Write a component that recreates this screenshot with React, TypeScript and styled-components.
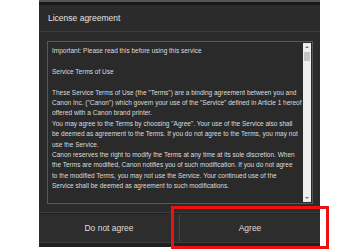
import React from 'react';
import styled, { createGlobalStyle } from 'styled-components';

const GlobalStyle = createGlobalStyle`
    html, body {
        margin: 0;
        padding: 0;
        background: #fff;
    }
    body {
        font-family: "Liberation Sans", Arial, sans-serif;
    }
`;

const Page = styled.div`
    position: relative;
    width: 364px;
    height: 250px;
    overflow: hidden;
    padding-left: 39px;
    box-sizing: border-box;
`;

const Dialog = styled.div`
    width: 281px;
    display: flex;
    flex-direction: column;
    background: #2b2b2b;
    border-top: 2px solid #555;
    box-shadow: inset 0 3px 0 #181818;
`;

const Header = styled.div`
    height: 26px;
    margin-top: 3px;
    display: flex;
    align-items: center;
    padding-left: 9px;
    border-bottom: 1px solid #3d3d3d;
    color: #e2e2e2;
    font-size: 8.5px;
`;

const Body = styled.div`
    padding: 9px 7px 8px 8px;
    border-bottom: 1px solid #3d3d3d;
`;

const TermsBox = styled.div`
    height: 161px;
    display: flex;
    border: 1px solid #585858;
    background: #2a2a2a;
`;

const TermsText = styled.div`
    flex: 1;
    overflow: hidden;
    padding: 4px 0 0 4px;
    color: #dcdcdc;
    font-size: 6.5px;
    line-height: 10.4px;
    white-space: nowrap;
`;

const Para = styled.p`
    margin: 0 0 10.4px;
`;

const Scrollbar = styled.div`
    width: 8px;
    margin: 1px 1px 1px 0;
    display: flex;
    flex-direction: column;
    align-items: center;
    background: #eeeeee;
`;

const Arrow = styled.div<{ $down?: boolean }>`
    height: 8px;
    display: flex;
    align-items: center;
    justify-content: center;
    margin-top: ${({ $down }) => ($down ? 'auto' : '0')};

    &::before {
        content: '';
        border-left: 2px solid transparent;
        border-right: 2px solid transparent;
        ${({ $down }) => ($down ? 'border-top: 2px solid #777;' : 'border-bottom: 2px solid #777;')}
    }
`;

const Thumb = styled.div`
    width: 6px;
    height: 9px;
    margin-top: 1px;
    background: #c3c3c3;
`;

const Footer = styled.div`
    display: flex;
    height: 28px;
    border-top: 1px solid #222;
    border-bottom: 1px solid #3c3c3c;
`;

const FooterButton = styled.button<{ $divider?: boolean }>`
    flex: 1;
    background: #2d2d2d;
    border: none;
    border-left: ${({ $divider }) => ($divider ? '1px solid #444' : 'none')};
    color: #dddddd;
    font-family: "Liberation Sans", Arial, sans-serif;
    font-size: 8.5px;
    padding: 0;
`;

const BottomEdge = styled.div`
    height: 4px;
    background: #202020;
`;

const Highlight = styled.div`
    position: absolute;
    left: 171px;
    top: 206px;
    width: 158px;
    height: 43px;
    box-sizing: border-box;
    border: 3px solid #ee1111;
    pointer-events: none;
`;

const App = () => {
    return (
        <Page>
            <GlobalStyle />
            <Dialog>
                <Header>License agreement</Header>
                <Body>
                    <TermsBox>
                        <TermsText>
                            <Para>Important: Please read this before using this service</Para>
                            <Para>Service Terms of Use</Para>
                            <Para>
                                These Service Terms of Use (the "Terms") are a binding agreement between you and
                                <br />
                                Canon Inc. ("Canon") which govern your use of the "Service" defined in Article 1 hereof
                                <br />
                                offered with a Canon brand printer.
                                <br />
                                You may agree to the Terms by choosing "Agree". Your use of the Service also shall
                                <br />
                                be deemed as agreement to the Terms. If you do not agree to the Terms, you may not
                                <br />
                                use the Service.
                                <br />
                                Canon reserves the right to modify the Terms at any time at its sole discretion. When
                                <br />
                                the Terms are modified, Canon notifies you of such modification. If you do not agree
                                <br />
                                to the modified Terms, you may not use the Service. Your continued use of the
                                <br />
                                Service shall be deemed as agreement to such modifications.
                            </Para>
                        </TermsText>
                        <Scrollbar>
                            <Arrow />
                            <Thumb />
                            <Arrow $down />
                        </Scrollbar>
                    </TermsBox>
                </Body>
                <Footer>
                    <FooterButton>Do not agree</FooterButton>
                    <FooterButton $divider>Agree</FooterButton>
                </Footer>
                <BottomEdge />
            </Dialog>
            <Highlight />
        </Page>
    );
};

export default App;
